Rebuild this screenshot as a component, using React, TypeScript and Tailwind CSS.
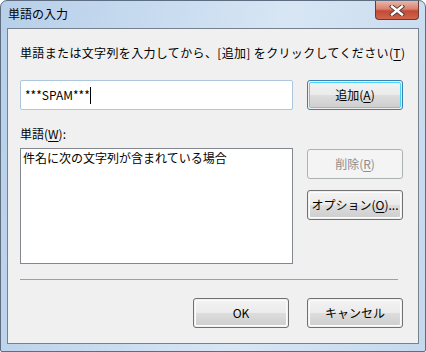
import React from "react";

const font = { fontFamily: '"Noto Sans CJK JP", "Noto Sans", sans-serif' };

function Btn({
  children,
  w = "w-[96px]",
  isDefault = false,
  disabled = false,
}: {
  children: React.ReactNode;
  w?: string;
  isDefault?: boolean;
  disabled?: boolean;
}) {
  if (disabled) {
    return (
      <div
        className={`${w} h-[30px] rounded-[3px] border border-[#adb2b5] bg-[#f4f4f4] flex items-center justify-center text-[12px] text-[#8d8d8d]`}
      >
        {children}
      </div>
    );
  }
  return (
    <div
      className={`${w} h-[30px] rounded-[3px] border ${
        isDefault ? "border-[#3c7fb1]" : "border-[#707070]"
      } p-px`}
    >
      <div
        className={`h-full w-full rounded-[2px] border ${
          isDefault ? "border-[#48d8fb]" : "border-[#fcfcfc]"
        } bg-[linear-gradient(to_bottom,#f2f2f2_0%,#ebebeb_50%,#dddddd_51%,#cfcfcf_100%)] flex items-center justify-center text-[12px] text-black`}
      >
        {children}
      </div>
    </div>
  );
}

function U({ children }: { children: React.ReactNode }) {
  return <span className="underline underline-offset-2">{children}</span>;
}

export default function App() {
  return (
    <div
      className="w-[426px] h-[352px] rounded-t-[7px] rounded-b-[2px] border border-[#5d6e82] bg-[linear-gradient(100deg,#b7cfe9_0%,#c9dcf0_35%,#d8e6f4_60%,#c4d8ee_100%)] flex flex-col px-[6px] pb-[7px]"
      style={font}
    >
      <div className="h-[27px] flex items-start justify-between">
        <div className="pt-[5px] pl-[1px] text-[12px] leading-[16px] text-black">
          単語の入力
        </div>
        <div className="w-[44px] h-[19px] rounded-b-[4px] border border-t-0 border-[#6a3a33] bg-[linear-gradient(to_bottom,#eab7a9_0%,#d9806d_45%,#c34a34_55%,#d0654c_100%)] flex items-center justify-center">
          <svg width="16" height="11" viewBox="0 0 16 11">
            <path
              d="M3 1.5 L13 9.5 M13 1.5 L3 9.5"
              stroke="#4a3a3a"
              strokeWidth="4.2"
              strokeLinecap="square"
            />
            <path
              d="M3 1.5 L13 9.5 M13 1.5 L3 9.5"
              stroke="#ffffff"
              strokeWidth="2.4"
              strokeLinecap="square"
            />
          </svg>
        </div>
      </div>
      <div className="flex-1 border border-[#78828e] bg-[#f0f0f0] flex flex-col pl-[12px] pr-[15px] text-[12px] leading-[16px] text-black">
        <div className="mt-[16px] whitespace-nowrap tracking-[0.35px]">
          単語または文字列を入力してから、[追加] をクリックしてください(<U>T</U>)
        </div>
        <div className="mt-[19px] flex gap-[14px]">
          <div className="w-[273px] h-[30px] rounded-[2px] border border-[#abc6dd] bg-white flex items-center pl-[4px]">
            <span>***SPAM***</span>
            <span className="inline-block w-px h-[17px] bg-black" />
          </div>
          <Btn isDefault>
            追加(<U>A</U>)
          </Btn>
        </div>
        <div className="mt-[16px]">
          単語(<U>W</U>):
        </div>
        <div className="mt-[6px] flex gap-[14px]">
          <div className="w-[273px] h-[116px] border border-[#828790] bg-white pl-[2px] pt-[1px]">
            件名に次の文字列が含まれている場合
          </div>
          <div className="flex flex-col pt-px gap-[11px]">
            <Btn disabled>
              削除(<U>R</U>)
            </Btn>
            <Btn>
              オプション(<U>O</U>)...
            </Btn>
          </div>
        </div>
        <div className="mt-[15px] mr-[5px] h-px bg-[#a0a0a0]" />
        <div className="mt-[18px] flex justify-end gap-[18px]">
          <Btn>OK</Btn>
          <Btn>キャンセル</Btn>
        </div>
      </div>
    </div>
  );
}
